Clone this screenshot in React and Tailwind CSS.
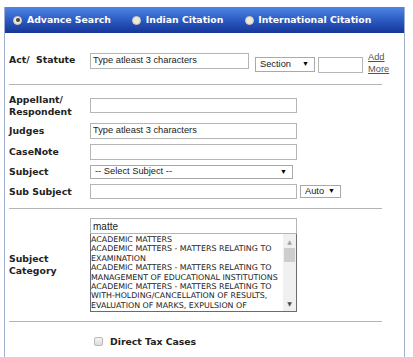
const Radio = ({ checked }) => (
    <span className="flex items-center justify-center w-[9px] h-[9px] rounded-full bg-[#efe9da] border border-[#cfc6b0]">
        {checked && <span className="w-[4px] h-[4px] rounded-full bg-[#444]" />}
    </span>
);

const TextBox = ({ value, className = "" }) => (
    <div
        className={`flex items-center bg-white border border-[#b5b5b5] pl-[2px] text-[9.3px] text-[#222] whitespace-nowrap overflow-hidden ${className}`}
        style={{ fontFamily: '"Liberation Sans", Arial, sans-serif' }}
    >
        {value}
    </div>
);

const Select = ({ label, className = "" }) => (
    <div
        className={`flex items-center justify-between bg-white border border-[#a9a9a9] pl-[4px] pr-[5px] text-[9.3px] text-[#222] ${className}`}
        style={{ fontFamily: '"Liberation Sans", Arial, sans-serif' }}
    >
        <span>{label}</span>
        <span className="text-[7px] text-black">▼</span>
    </div>
);

const Label = ({ children, className = "" }) => (
    <div className={`w-[81px] shrink-0 text-[9.3px] font-bold leading-[12px] text-[#222] ${className}`}>{children}</div>
);

const listLines = [
    "ACADEMIC MATTERS",
    "ACADEMIC MATTERS - MATTERS RELATING TO",
    "EXAMINATION",
    "ACADEMIC MATTERS - MATTERS RELATING TO",
    "MANAGEMENT OF EDUCATIONAL INSTITUTIONS",
    "ACADEMIC MATTERS - MATTERS RELATING TO",
    "WITH-HOLDING/CANCELLATION OF RESULTS,",
    "EVALUATION OF MARKS, EXPULSION OF",
];

export default function App() {
    return (
        <div className="w-[413px] h-[357px] overflow-hidden bg-white pt-[7px] pl-[4px]" style={{ fontFamily: '"DejaVu Sans", Verdana, sans-serif' }}>
            <div className="w-[401px] border-x border-[#9fb0d0] pb-[40px]">
                {/* Tabs */}
                <div className="h-[26px] flex items-center pl-[8px] bg-gradient-to-b from-[#4f86e3] via-[#2c5bc4] to-[#173596] text-white text-[9.3px] font-bold">
                    <Radio checked />
                    <span className="ml-[5px]">Advance Search</span>
                    <span className="ml-[21px]"><Radio /></span>
                    <span className="ml-[5px]">Indian Citation</span>
                    <span className="ml-[22px]"><Radio /></span>
                    <span className="ml-[4px]">International Citation</span>
                </div>

                <div className="pt-[18px]">
                    {/* Act / Statute */}
                    <div className="flex items-start pl-[4px]">
                        <Label className="mt-[3px]">Act/&nbsp; Statute</Label>
                        <TextBox value="Type atleast 3 characters" className="mt-[2px] w-[159px] h-[16px]" />
                        <Select label="Section" className="mt-[6px] ml-[6px] w-[60px] h-[15px]" />
                        <TextBox value="" className="mt-[6px] ml-[3px] w-[45px] h-[16px]" />
                        <div
                            className="ml-[5px] text-[9.3px] leading-[12px] text-[#555] underline"
                            style={{ fontFamily: '"Liberation Sans", Arial, sans-serif' }}
                        >
                            <div>Add</div>
                            <div>More</div>
                        </div>
                    </div>

                    <div className="mt-[9px] ml-[4px] w-[373px] border-t border-[#b3b3b3]" />

                    {/* Appellant */}
                    <div className="mt-[9px] flex items-start pl-[4px]">
                        <Label>
                            <div>Appellant/</div>
                            <div>Respondent</div>
                        </Label>
                        <TextBox value="" className="mt-[4px] w-[207px] h-[15px]" />
                    </div>

                    <div className="mt-[5px] flex items-center pl-[4px]">
                        <Label>Judges</Label>
                        <TextBox value="Type atleast 3 characters" className="w-[207px] h-[16px]" />
                    </div>

                    <div className="mt-[5px] flex items-center pl-[4px]">
                        <Label>CaseNote</Label>
                        <TextBox value="" className="w-[207px] h-[16px]" />
                    </div>

                    <div className="mt-[5px] flex items-center pl-[4px]">
                        <Label>Subject</Label>
                        <Select label="-- Select Subject --" className="w-[203px] h-[14px]" />
                    </div>

                    <div className="mt-[5px] flex items-center pl-[4px]">
                        <Label>Sub Subject</Label>
                        <TextBox value="" className="w-[207px] h-[15px]" />
                        <Select label="Auto" className="ml-[3px] w-[41px] h-[13px]" />
                    </div>

                    <div className="mt-[9px] ml-[4px] w-[373px] border-t border-[#b3b3b3]" />

                    {/* Subject Category */}
                    <div className="mt-[9px] flex items-center pl-[4px]">
                        <Label>
                            <div>Subject</div>
                            <div>Category</div>
                        </Label>
                        <div className="w-[207px]">
                            <TextBox value="matte" className="h-[16px] border-[#7eb4ea] text-[10px]" />
                            <div className="flex h-[78px] border border-t-0 border-[#6b6b6b] bg-white">
                                <div className="flex-1 overflow-hidden pt-[1px] text-[7.9px] leading-[9.4px] text-[#222]" style={{ fontFamily: '"DejaVu Sans", Tahoma, sans-serif' }}>
                                    {listLines.map((line, i) => (
                                        <div key={i} className="whitespace-nowrap">{line}</div>
                                    ))}
                                </div>
                                <div className="w-[13px] flex flex-col items-center bg-[#f0f0f0]">
                                    <span className="mt-[4px] text-[6px] leading-[8px] text-[#a3a3a3]">▲</span>
                                    <div className="mt-[2px] w-[11px] h-[14px] bg-[#cdcdcd]" />
                                    <span className="mt-auto mb-[3px] text-[6px] leading-[8px] text-[#505050]">▼</span>
                                </div>
                            </div>
                        </div>
                    </div>

                    <div className="mt-[9px] ml-[4px] w-[373px] border-t border-[#b3b3b3]" />

                    {/* Direct Tax */}
                    <div className="mt-[13px] flex items-center pl-[89px]">
                        <span className="w-[9px] h-[9px] rounded-[2px] border border-[#b9b9b9] bg-gradient-to-b from-[#f4f4f4] to-[#dcdcdc]" />
                        <span className="ml-[7px] text-[9.3px] font-bold text-[#222]">Direct Tax Cases</span>
                    </div>
                </div>
            </div>
        </div>
    );
}
